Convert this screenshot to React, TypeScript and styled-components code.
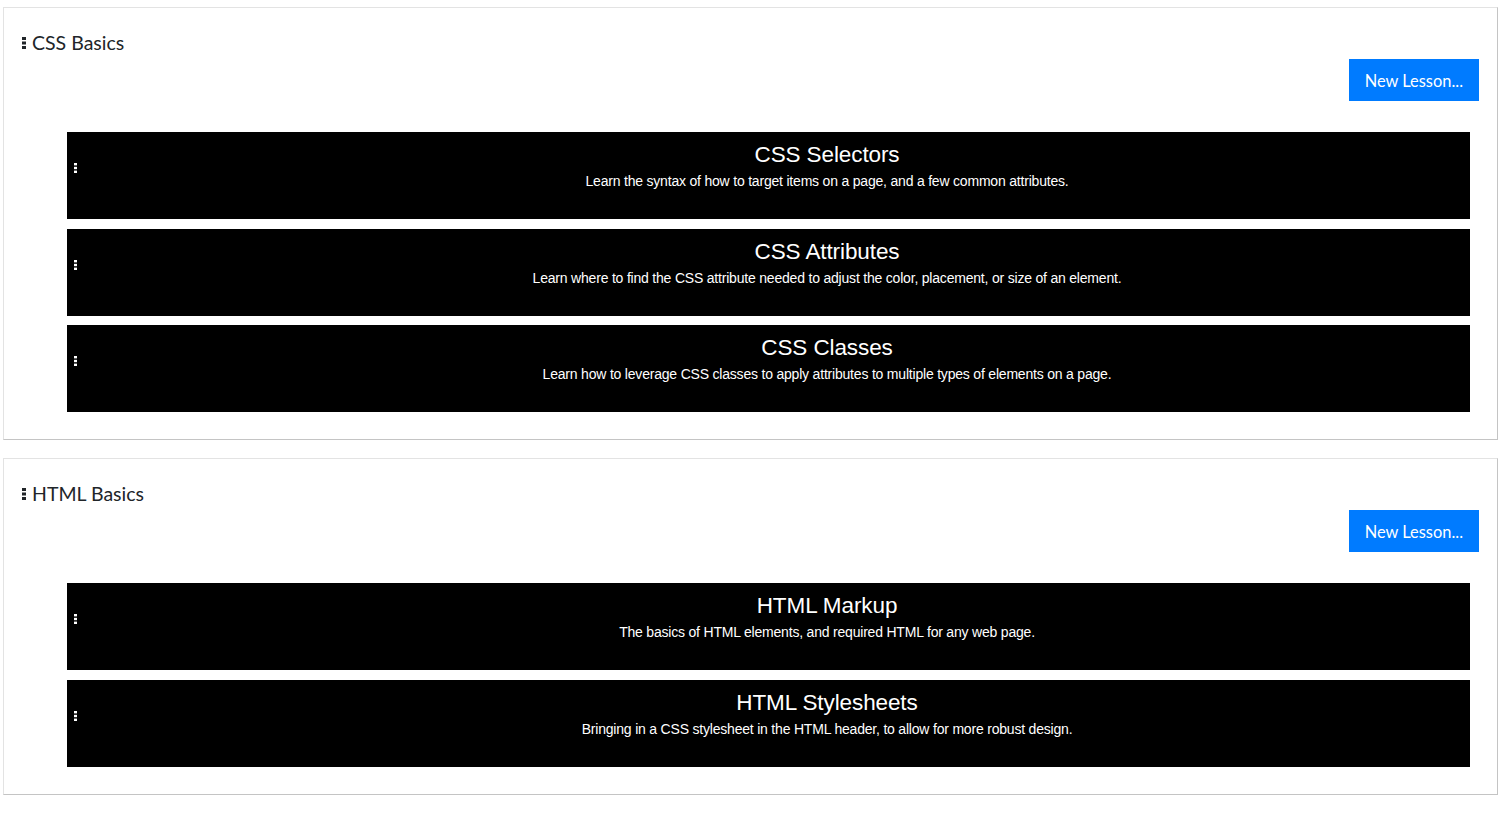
import React from "react";
import styled, { createGlobalStyle } from "styled-components";

type TLesson = {
  title: string;
  description: string;
};

type TCourse = {
  name: string;
  lessons: TLesson[];
};

type TGripProps = {
  color: string;
};

const courses: TCourse[] = [
  {
    name: "CSS Basics",
    lessons: [
      {
        title: "CSS Selectors",
        description:
          "Learn the syntax of how to target items on a page, and a few common attributes.",
      },
      {
        title: "CSS Attributes",
        description:
          "Learn where to find the CSS attribute needed to adjust the color, placement, or size of an element.",
      },
      {
        title: "CSS Classes",
        description:
          "Learn how to leverage CSS classes to apply attributes to multiple types of elements on a page.",
      },
    ],
  },
  {
    name: "HTML Basics",
    lessons: [
      {
        title: "HTML Markup",
        description:
          "The basics of HTML elements, and required HTML for any web page.",
      },
      {
        title: "HTML Stylesheets",
        description:
          "Bringing in a CSS stylesheet in the HTML header, to allow for more robust design.",
      },
    ],
  },
];

const GlobalStyle = createGlobalStyle`
  body {
    margin: 0;
    background: #ffffff;
    font-family: "Lato", "Open Sans", sans-serif;
  }
`;

const PageContainer = styled.div`
  display: flex;
  flex-direction: column;
  gap: 18px;
  padding: 7px 10px 0 3px;
`;

const CourseCard = styled.section`
  display: flex;
  flex-direction: column;
  border: 1px solid #e3e3e3;
  border-right-color: #c4c4c4;
  border-bottom-color: #c4c4c4;
  padding: 0 18px 27px 18px;
`;

const CourseTitle = styled.h2`
  display: flex;
  align-items: center;
  gap: 6px;
  margin: 22px 0 0;
  height: 25px;
  font-family: "Lato", "Open Sans", sans-serif;
  font-weight: 400;
  font-size: 19.5px;
  color: #212529;
`;

const ButtonRow = styled.div`
  display: flex;
  justify-content: flex-end;
  margin-top: 4px;
`;

const NewLessonButton = styled.button`
  height: 42px;
  padding: 0 16px;
  border: none;
  border-radius: 0;
  background: #007bff;
  color: #ffffff;
  font-family: "Lato", "Open Sans", sans-serif;
  font-size: 16.4px;
  cursor: pointer;
`;

const LessonList = styled.div`
  display: flex;
  flex-direction: column;
  gap: 9.5px;
  margin: 31px 9px 0 45px;
`;

const LessonRow = styled.div`
  display: grid;
  grid-template-columns: 117px 1fr;
  height: 87px;
  background: #000000;
  color: #ffffff;
  font-family: "Liberation Sans", Arial, sans-serif;
`;

const GripCell = styled.div`
  padding: 27px 0 0 7px;
`;

const LessonText = styled.div`
  display: flex;
  flex-direction: column;
  align-items: center;
  padding-top: 9px;
`;

const LessonTitle = styled.h3`
  margin: 0;
  font-size: 22.5px;
  font-weight: 400;
  line-height: 28px;
  letter-spacing: -0.1px;
`;

const LessonDescription = styled.p`
  margin: 4px 0 0;
  font-size: 14px;
  line-height: 16px;
  letter-spacing: -0.2px;
`;

const Grip = ({ color }: TGripProps) => (
  <svg width="4" height="12" viewBox="0 0 4 12">
    <rect x="0" y="0" width="4" height="3" fill={color} />
    <rect x="0" y="4.5" width="4" height="3" fill={color} />
    <rect x="0" y="9" width="4" height="3" fill={color} />
  </svg>
);

const SmallGrip = ({ color }: TGripProps) => (
  <svg width="3" height="10" viewBox="0 0 3 10">
    <rect x="0" y="0" width="3" height="2.4" fill={color} />
    <rect x="0" y="3.8" width="3" height="2.4" fill={color} />
    <rect x="0" y="7.6" width="3" height="2.4" fill={color} />
  </svg>
);

const LessonItem = ({ lesson }: { lesson: TLesson }) => {
  return (
    <LessonRow>
      <GripCell>
        <SmallGrip color="#ffffff" />
      </GripCell>
      <LessonText>
        <LessonTitle>{lesson.title}</LessonTitle>
        <LessonDescription>{lesson.description}</LessonDescription>
      </LessonText>
    </LessonRow>
  );
};

const Course = ({ course }: { course: TCourse }) => {
  return (
    <CourseCard>
      <CourseTitle>
        <Grip color="#212529" />
        {course.name}
      </CourseTitle>
      <ButtonRow>
        <NewLessonButton>New Lesson...</NewLessonButton>
      </ButtonRow>
      <LessonList>
        {course.lessons.map((lesson, index) => (
          <LessonItem key={index} lesson={lesson} />
        ))}
      </LessonList>
    </CourseCard>
  );
};

const App = () => {
  return (
    <>
      <GlobalStyle />
      <PageContainer>
        {courses.map((course, index) => (
          <Course key={index} course={course} />
        ))}
      </PageContainer>
    </>
  );
};

export default App;
